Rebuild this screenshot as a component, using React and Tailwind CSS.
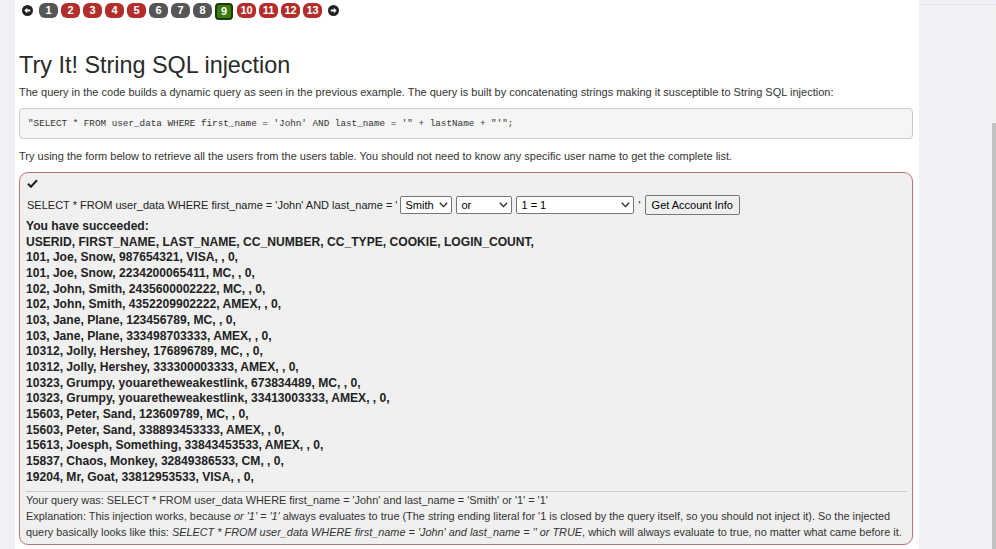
import React from 'react';

const pages = [
  { n: 1, c: 'gray' }, { n: 2, c: 'red' }, { n: 3, c: 'red' }, { n: 4, c: 'red' }, { n: 5, c: 'red' },
  { n: 6, c: 'gray' }, { n: 7, c: 'gray' }, { n: 8, c: 'gray' }, { n: 9, c: 'green' },
  { n: 10, c: 'red' }, { n: 11, c: 'red' }, { n: 12, c: 'red' }, { n: 13, c: 'red' },
];

const rows = [
  'USERID, FIRST_NAME, LAST_NAME, CC_NUMBER, CC_TYPE, COOKIE, LOGIN_COUNT,',
  '101, Joe, Snow, 987654321, VISA, , 0,',
  '101, Joe, Snow, 2234200065411, MC, , 0,',
  '102, John, Smith, 2435600002222, MC, , 0,',
  '102, John, Smith, 4352209902222, AMEX, , 0,',
  '103, Jane, Plane, 123456789, MC, , 0,',
  '103, Jane, Plane, 333498703333, AMEX, , 0,',
  '10312, Jolly, Hershey, 176896789, MC, , 0,',
  '10312, Jolly, Hershey, 333300003333, AMEX, , 0,',
  '10323, Grumpy, youaretheweakestlink, 673834489, MC, , 0,',
  '10323, Grumpy, youaretheweakestlink, 33413003333, AMEX, , 0,',
  '15603, Peter, Sand, 123609789, MC, , 0,',
  '15603, Peter, Sand, 338893453333, AMEX, , 0,',
  '15613, Joesph, Something, 33843453533, AMEX, , 0,',
  '15837, Chaos, Monkey, 32849386533, CM, , 0,',
  '19204, Mr, Goat, 33812953533, VISA, , 0,',
];

function CircleArrow({ dir }) {
  return (
    <svg width="11" height="11" viewBox="0 0 16 16">
      <circle cx="8" cy="8" r="8" fill="#222" />
      {dir === 'left' ? (
        <path d="M3.5 8 L7.5 4 L7.5 6.4 L12 6.4 L12 9.6 L7.5 9.6 L7.5 12 Z" fill="#fff" />
      ) : (
        <path d="M12.5 8 L8.5 4 L8.5 6.4 L4 6.4 L4 9.6 L8.5 9.6 L8.5 12 Z" fill="#fff" />
      )}
    </svg>
  );
}

function Chevron() {
  return (
    <svg width="9" height="6" viewBox="0 0 9 6">
      <path d="M0.8 0.8 L4.5 4.6 L8.2 0.8" fill="none" stroke="#222" strokeWidth="1.3" />
    </svg>
  );
}

function FakeSelect({ value, width }) {
  return (
    <span className={`inline-flex items-center justify-between h-[18px] ${width} border border-[#767676] rounded-[2px] bg-white pl-[4px] pr-[3px] text-[11px] text-black`}>
      <span>{value}</span>
      <Chevron />
    </span>
  );
}

export default function App() {
  return (
    <div className="flex h-[549px] w-[996px] overflow-hidden bg-[#f0f1f6] text-[#333] font-['Liberation_Sans',Arial,sans-serif]">
      <div className="w-[15px] shrink-0" />

      <div className="w-[904px] shrink-0 bg-white pl-[4px] pr-[6px]">
        {/* pagination */}
        <div className="flex items-start h-[22px] pt-[3px] pl-[3px]">
          <span className="mt-[2px] mr-[6px]"><CircleArrow dir="left" /></span>
          {pages.map((p) => (
            <span
              key={p.n}
              className={
                p.c === 'green'
                  ? 'mr-[4px] flex items-center justify-center h-[17px] min-w-[18px] px-[3px] rounded-[4px] bg-[#3b7d0c] border-2 border-[#1b3a05] text-white text-[11px] font-bold'
                  : p.c === 'red'
                  ? 'mr-[3px] flex items-center justify-center h-[15px] min-w-[19px] px-[3px] rounded-[6px] bg-[#b32d2a] text-white text-[11px] font-bold'
                  : 'mr-[3px] flex items-center justify-center h-[15px] min-w-[19px] px-[3px] rounded-[6px] bg-[#565656] text-white text-[11px] font-bold'
              }
            >
              {p.n}
            </span>
          ))}
          <span className="mt-[2px] ml-[3px]"><CircleArrow dir="right" /></span>
        </div>

        <h2 className="mt-[29px] text-[23.4px] leading-[28px] text-[#2a2a2a]">Try It! String SQL injection</h2>

        <p className="mt-[5px] text-[11px] leading-[16px]">
          The query in the code builds a dynamic query as seen in the previous example. The query is built by concatenating strings making it susceptible to String SQL injection:
        </p>

        <pre className="mt-[8px] h-[31px] flex items-center px-[8px] bg-[#f5f5f5] border border-[#ccc] rounded-[4px] font-['Liberation_Mono',monospace] text-[9.3px] text-[#333]">
          {`"SELECT * FROM user_data WHERE first_name = 'John' AND last_name = '" + lastName + "'";`}
        </pre>

        <p className="mt-[9px] text-[11px] leading-[16px]">
          Try using the form below to retrieve all the users from the users table. You should not need to know any specific user name to get the complete list.
        </p>

        <div className="mt-[8px] h-[373px] border border-[#b87777] rounded-[9px] bg-[#f0f0f0] px-[5px] pt-[6px]">
          <svg width="11" height="9" viewBox="0 0 12 10" className="ml-[2px]">
            <path d="M1 5.2 L4.3 8.5 L11 1.5" fill="none" stroke="#222" strokeWidth="2.4" />
          </svg>

          <div className="mt-[7px] flex items-center text-[11px] text-[#222] h-[20px]">
            <span className="ml-[2px]">SELECT * FROM user_data WHERE first_name = 'John' AND last_name = '</span>
            <span className="ml-[3px]"><FakeSelect value="Smith" width="w-[52px]" /></span>
            <span className="ml-[4px]"><FakeSelect value="or" width="w-[56px]" /></span>
            <span className="ml-[4px]"><FakeSelect value="1 = 1" width="w-[118px]" /></span>
            <span className="ml-[4px]">'</span>
            <button className="ml-[4px] h-[20px] px-[6px] border border-[#767676] rounded-[2px] bg-[#efefef] text-[11px] text-black">
              Get Account Info
            </button>
          </div>

          <div className="mt-[4px] ml-[1px] font-bold text-[12.1px] leading-[15.65px] text-[#222]">
            <div>You have succeeded:</div>
            {rows.map((r) => (
              <div key={r}>{r}</div>
            ))}
          </div>

          <div className="mt-[6px] ml-[1px] border-t border-[#ccc]" />

          <div className="ml-[1px] text-[10.9px] leading-[16px] text-[#333]">
            <div>Your query was: SELECT * FROM user_data WHERE first_name = 'John' and last_name = 'Smith' or '1' = '1'</div>
            <div>
              Explanation: This injection works, because <i>or '1' = '1'</i> always evaluates to true (The string ending literal for '1 is closed by the query itself, so you should not inject it). So the injected query basically looks like this: <i>SELECT * FROM user_data WHERE first_name = 'John' and last_name = '' or TRUE</i>, which will always evaluate to true, no matter what came before it.
            </div>
          </div>
        </div>
      </div>

      <div className="flex-1 flex border-t border-[#e2e2e6] mt-[4px]">
        <div className="flex-1" />
        <div className="w-[4px] flex flex-col bg-[#f1f1f1]">
          <div className="h-[118px]" />
          <div className="flex-1 bg-[#c1c1c1]" />
        </div>
      </div>
    </div>
  );
}
